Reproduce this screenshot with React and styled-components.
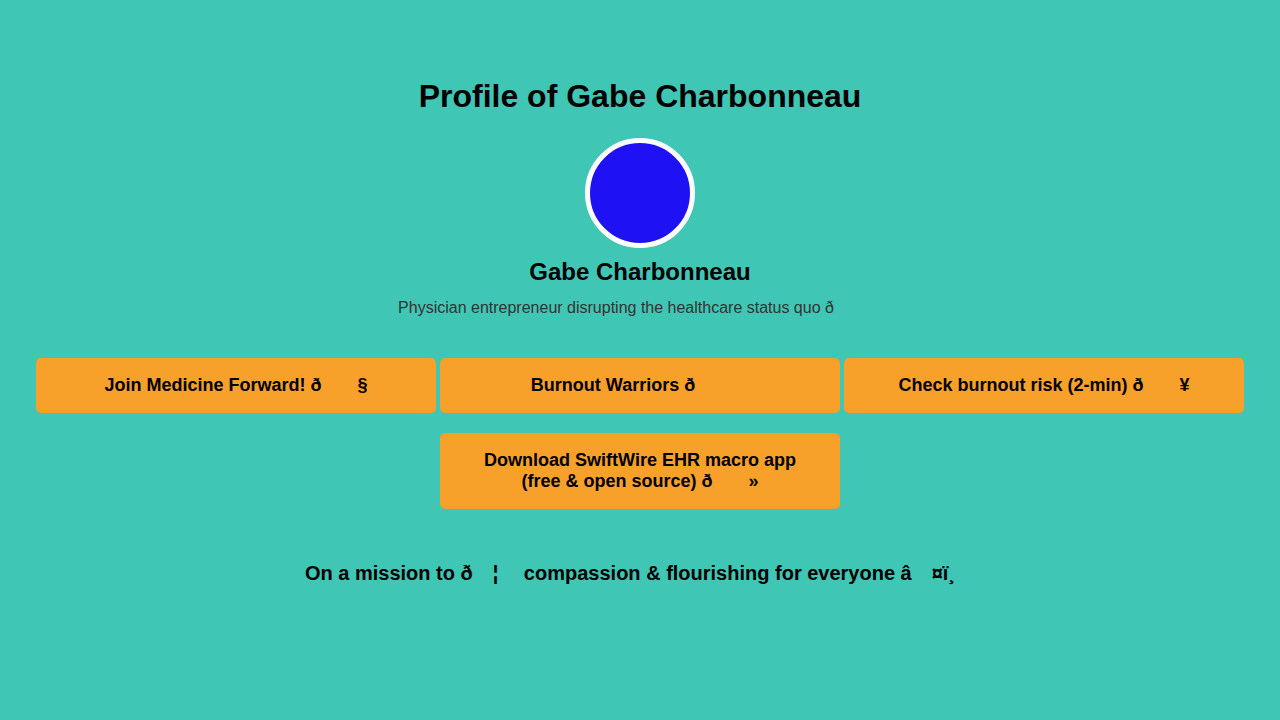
import React from "react";
import styled, { createGlobalStyle } from "styled-components";

const Global = createGlobalStyle`
  html, body { margin: 0; padding: 0; }
  body {
    background: #40c6b4;
    font-family: "Liberation Sans", Arial, sans-serif;
    color: #000;
  }
`;

const Page = styled.main`
  display: flex;
  flex-direction: column;
  align-items: center;
  padding: 78px 36px 40px;
  min-height: 720px;
  box-sizing: border-box;
`;

const Title = styled.h1`
  margin: 0;
  font-size: 32px;
  font-weight: 700;
  line-height: 37px;
  text-align: center;
`;

const Avatar = styled.div`
  margin-top: 23px;
  width: 110px;
  height: 110px;
  box-sizing: border-box;
  border-radius: 50%;
  border: 5px solid #ffffff;
  background: #1e12f5;
`;

const Name = styled.h2`
  margin: 10px 0 0;
  font-size: 24px;
  font-weight: 700;
  line-height: 28px;
  text-align: center;
`;

const Bio = styled.p`
  margin: 13px 0 0;
  font-size: 16px;
  line-height: 18px;
  color: #333333;
  text-align: center;
`;

const Links = styled.div`
  margin-top: 41px;
  display: flex;
  flex-wrap: wrap;
  justify-content: center;
  column-gap: 4px;
  row-gap: 20px;
  width: 1208px;
`;

const LinkButton = styled.a`
  display: flex;
  align-items: center;
  justify-content: center;
  box-sizing: border-box;
  width: 400px;
  min-height: 55px;
  padding: 17px 40px;
  background: #f7a12a;
  border-radius: 5px;
  color: #000;
  font-size: 18px;
  font-weight: 700;
  line-height: 21px;
  text-align: center;
  text-decoration: none;
`;

const Label = styled.span`
  display: block;
`;

const Ctl = styled.span`
  display: inline-block;
  width: 1em;
`;

const Mission = styled.p`
  margin: 53px 0 0;
  font-size: 20px;
  font-weight: 700;
  line-height: 23px;
  text-align: center;
`;

function Garbled({ text }) {
  const parts = [];
  let buf = "";
  Array.from(text).forEach((ch, i) => {
    const c = ch.charCodeAt(0);
    if (c >= 0x80 && c <= 0x9f) {
      if (buf) parts.push(buf);
      buf = "";
      parts.push(<Ctl key={i}>{ch}</Ctl>);
    } else {
      buf += ch;
    }
  });
  if (buf) parts.push(buf);
  return <>{parts}</>;
}

const links = [
  "Join Medicine Forward! \u00f0\u009f\u0091\u00a7",
  "Burnout Warriors \u00f0\u009f\u008f\u0086",
  "Check burnout risk (2-min) \u00f0\u009f\u0092\u00a5",
  "Download SwiftWire EHR macro app (free & open source) \u00f0\u009f\u0092\u00bb",
];

export default function App() {
  return (
    <>
      <Global />
      <Page>
        <Title>Profile of Gabe Charbonneau</Title>
        <Avatar />
        <Name>Gabe Charbonneau</Name>
        <Bio>
          <Garbled text={"Physician entrepreneur disrupting the healthcare status quo \u00f0\u009f\u009a\u0080"} />
        </Bio>
        <Links>
          {links.map((t) => (
            <LinkButton key={t} href="#">
              <Label>
                <Garbled text={t} />
              </Label>
            </LinkButton>
          ))}
        </Links>
        <Mission>
          <Garbled
            text={"On a mission to \u00f0\u009f\u00a6\u008b compassion & flourishing for everyone \u00e2\u009d\u00a4\u00ef\u00b8\u008f"}
          />
        </Mission>
      </Page>
    </>
  );
}
